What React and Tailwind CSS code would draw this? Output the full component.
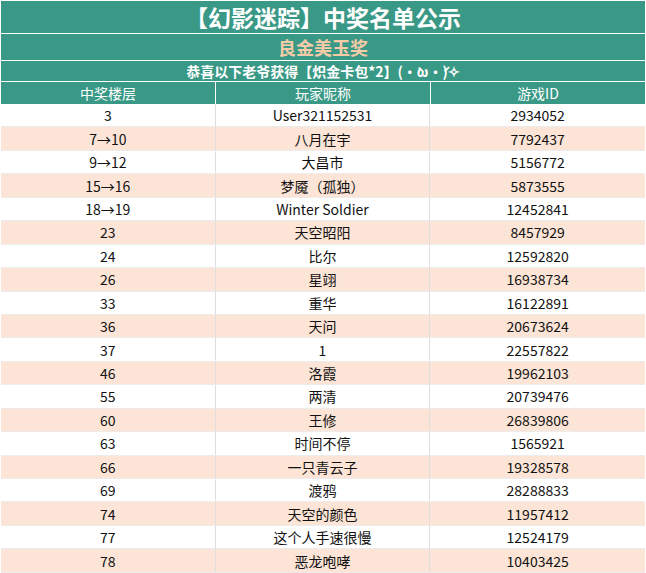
const rows = [
  ['3', 'User321152531', '2934052'],
  ['7→10', '八月在宇', '7792437'],
  ['9→12', '大昌市', '5156772'],
  ['15→16', '梦魇（孤独）', '5873555'],
  ['18→19', 'Winter Soldier', '12452841'],
  ['23', '天空昭阳', '8457929'],
  ['24', '比尔', '12592820'],
  ['26', '星翊', '16938734'],
  ['33', '重华', '16122891'],
  ['36', '天问', '20673624'],
  ['37', '1', '22557822'],
  ['46', '洛霞', '19962103'],
  ['55', '两清', '20739476'],
  ['60', '王修', '26839806'],
  ['63', '时间不停', '1565921'],
  ['66', '一只青云子', '19328578'],
  ['69', '渡鸦', '28288833'],
  ['74', '天空的颜色', '11957412'],
  ['77', '这个人手速很慢', '12524179'],
  ['78', '恶龙咆哮', '10403425'],
]

const font = { fontFamily: '"Microsoft YaHei", "Noto Sans CJK SC", sans-serif' }

export default function App() {
  return (
    <div className="w-[646px] h-[573px] overflow-hidden bg-white px-px pt-px" style={font}>
      {/* title block */}
      <div className="flex flex-col gap-px">
        <div className="h-[32px] bg-[#3a9986] flex items-center justify-center text-white font-bold text-[23px] leading-none">
          【幻影迷踪】中奖名单公示
        </div>
        <div className="h-[26px] bg-[#3a9986] flex items-center justify-center text-[#f6cba7] font-bold text-[18px] leading-none">
          良金美玉奖
        </div>
        <div className="h-[20px] bg-[#3a9986] flex items-center justify-center text-white font-bold text-[14px] leading-none">
          恭喜以下老爷获得【炽金卡包*2】(•̀ω•́)✧
        </div>
        <div className="h-[22px] grid grid-cols-3 gap-px text-white text-[14px]">
          {['中奖楼层', '玩家昵称', '游戏ID'].map(h => (
            <div key={h} className="bg-[#3a9986] flex items-center justify-center leading-none">{h}</div>
          ))}
        </div>
      </div>

      {/* data rows */}
      <div className="flex flex-col">
        {rows.map((r, i) => (
          <div
            key={i}
            className={`h-[23.45px] box-border grid grid-cols-3 border-b border-[#ececec] text-[14px] text-[#111] ${
              i % 2 ? 'bg-[#fce4d6]' : 'bg-white'
            }`}
          >
            {r.map((c, j) => (
              <div
                key={j}
                className={`flex items-center justify-center leading-none ${j < 2 ? 'border-r border-[#dedede]' : ''}`}
              >
                {c}
              </div>
            ))}
          </div>
        ))}
      </div>
    </div>
  )
}
